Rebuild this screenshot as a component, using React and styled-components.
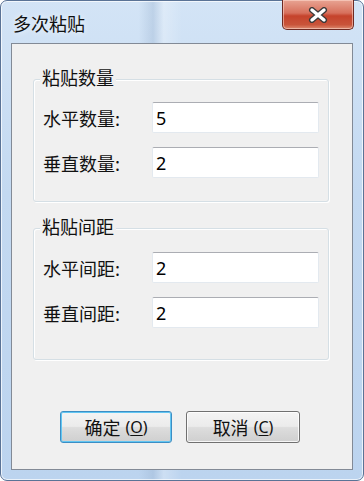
import styled, { createGlobalStyle } from 'styled-components'

const Global = createGlobalStyle`
  html, body {
    margin: 0;
    padding: 0;
    overflow: hidden;
    background: #ffffff;
  }
  body {
    font-family: "Noto Sans CJK SC", "Noto Sans", sans-serif;
  }
`;

const Window = styled.div`
  box-sizing: border-box;
  width: 364px;
  height: 481px;
  display: flex;
  flex-direction: column;
  padding: 0 10px 10px 10px;
  border: 1px solid #5a7396;
  border-radius: 7px 7px 7px 7px;
  background:
    linear-gradient(90deg, rgba(255,255,255,0) 0%, rgba(255,255,255,0) 38%, rgba(150,175,205,0.35) 42%, rgba(255,255,255,0.25) 45%, rgba(255,255,255,0) 50%, rgba(255,255,255,0) 100%),
    linear-gradient(180deg, #d3e4f6 0%, #c3d9f1 40%, #bcd4ef 100%);
  box-shadow: inset 0 0 0 1px rgba(255,255,255,0.7);
`;

const TitleBar = styled.div`
  height: 42px;
  flex: none;
  display: flex;
  align-items: flex-start;
  justify-content: space-between;
`;

const Title = styled.div`
  margin: 11px 0 0 2px;
  font-size: 18px;
  line-height: 22px;
  color: #111;
  text-shadow: 0 0 6px rgba(255,255,255,0.9);
`;

const CloseButton = styled.div`
  width: 72px;
  height: 30px;
  margin: -1px -1px 0 0;
  box-sizing: border-box;
  border: 1px solid #6e2a22;
  border-top: none;
  border-radius: 0 0 5px 5px;
  background: linear-gradient(180deg, #e8a493 0%, #d7705c 45%, #c5432c 55%, #c9543a 85%, #dc8a6f 100%);
  box-shadow: inset 0 0 0 1px rgba(255,220,210,0.55);
  display: flex;
  align-items: center;
  justify-content: center;
`;

const Client = styled.div`
  flex: 1;
  display: flex;
  flex-direction: column;
  border: 1px solid #828a96;
  background: #f0f0f0;
  padding: 0 0 0 21px;
`;

const Group = styled.div`
  position: relative;
  box-sizing: border-box;
  width: 296px;
  margin-top: ${p => p.$top}px;
  padding: ${p => p.$padTop}px 0 ${p => p.$padBottom}px 9px;
  border: 1px solid #d5dfe5;
  border-radius: 3px;
  box-shadow: inset 1px 1px 0 #ffffff, 1px 1px 0 #ffffff;
  display: flex;
  flex-direction: column;
  gap: 14px;
`;

const Legend = styled.span`
  position: absolute;
  top: -13px;
  left: 6px;
  padding: 0 2px;
  background: #f0f0f0;
  font-size: 18px;
  line-height: 20px;
  color: #111;
`;

const Row = styled.div`
  display: flex;
  align-items: center;
`;

const Label = styled.label`
  width: 109px;
  flex: none;
  font-size: 18px;
  line-height: 22px;
  color: #111;
`;

const Input = styled.input`
  box-sizing: border-box;
  width: 167px;
  height: 31px;
  padding: 0 0 0 3px;
  border: 1px solid #e3e9ef;
  border-top-color: #abadb3;
  border-radius: 2px;
  background: #ffffff;
  font-family: "Noto Sans", "Liberation Sans", sans-serif;
  font-size: 18px;
  color: #000;
  outline: none;
`;

const ButtonRow = styled.div`
  display: flex;
  gap: 14px;
  margin: 51px 0 0 27px;
`;

const Button = styled.button`
  box-sizing: border-box;
  width: ${p => p.$w}px;
  height: 32px;
  padding: 0;
  border: 1px solid ${p => (p.$default ? '#3c8ec4' : '#707070')};
  border-radius: 3px;
  background: linear-gradient(180deg, #f4f4f4 0%, #ebebeb 48%, #dddddd 52%, #cfcfcf 100%);
  box-shadow: inset 0 0 0 1px ${p => (p.$default ? '#62c6f2' : 'rgba(255,255,255,0.8)')};
  font-family: "Noto Sans CJK SC", "Noto Sans", sans-serif;
  font-size: 18px;
  line-height: 22px;
  color: #111;
  display: flex;
  align-items: center;
  justify-content: center;
`;

const Key = styled.span`
  margin-left: 5px;
  font-family: "Noto Sans", sans-serif;
  font-size: 16px;

  u {
    text-underline-offset: 2px;
  }
`;

function CloseX() {
  return (
    <svg width="20" height="16" viewBox="0 0 20 16">
      <path d="M4 3 L16 13 M16 3 L4 13" stroke="#3a3a3a" strokeWidth="6" strokeLinecap="round" />
      <path d="M4 3 L16 13 M16 3 L4 13" stroke="#ffffff" strokeWidth="3.4" strokeLinecap="round" />
    </svg>
  )
}

function Field({ label, value }) {
  return (
    <Row>
      <Label>{label}</Label>
      <Input defaultValue={value} />
    </Row>
  )
}

export default function App() {
  return (
    <>
      <Global />
      <Window>
        <TitleBar>
          <Title>多次粘贴</Title>
          <CloseButton><CloseX /></CloseButton>
        </TitleBar>
        <Client>
          <Group $top={35} $padTop={22} $padBottom={23}>
            <Legend>粘贴数量</Legend>
            <Field label="水平数量:" value="5" />
            <Field label="垂直数量:" value="2" />
          </Group>
          <Group $top={26} $padTop={23} $padBottom={31}>
            <Legend>粘贴间距</Legend>
            <Field label="水平间距:" value="2" />
            <Field label="垂直间距:" value="2" />
          </Group>
          <ButtonRow>
            <Button $w={112} $default>确定<Key>(<u>O</u>)</Key></Button>
            <Button $w={114}>取消<Key>(<u>C</u>)</Key></Button>
          </ButtonRow>
        </Client>
      </Window>
    </>
  )
}
